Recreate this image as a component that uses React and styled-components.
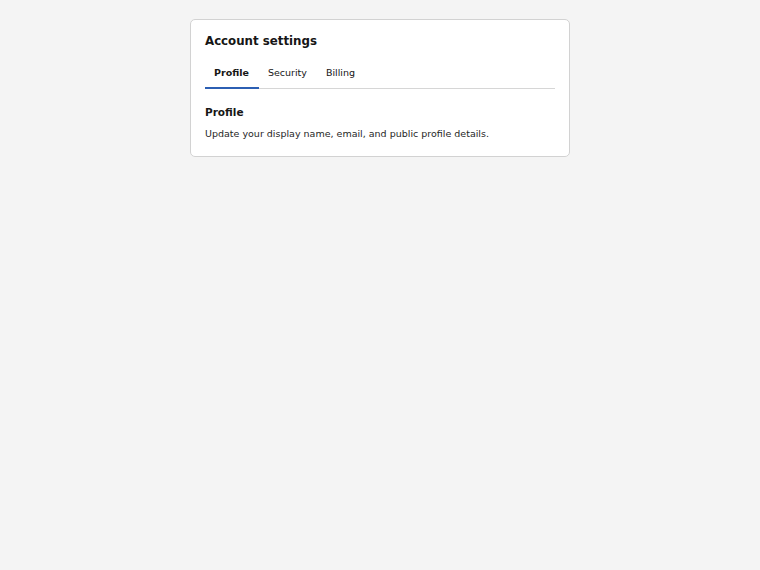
import React, { useState } from "react";
import styled, { createGlobalStyle } from "styled-components";

const GlobalStyle = createGlobalStyle`
  html, body {
    margin: 0;
    padding: 0;
    background: #f4f4f4;
    font-family: "DejaVu Sans", "Liberation Sans", sans-serif;
    color: #161616;
  }
`;

const Page = styled.div`
  display: flex;
  justify-content: center;
  padding-top: 19px;
`;

const Card = styled.section`
  width: 380px;
  box-sizing: border-box;
  background: #ffffff;
  border: 1px solid #d2d2d2;
  border-radius: 5px;
  padding: 13px 14px 16px;
`;

const Title = styled.h1`
  margin: 0;
  font-size: 11.8px;
  font-weight: 700;
  line-height: 16px;
`;

const TabList = styled.div`
  display: flex;
  margin-top: 16px;
  border-bottom: 1px solid #d6d6d6;
`;

const Tab = styled.button`
  appearance: none;
  background: none;
  border: none;
  border-bottom: 2px solid ${(p) => (p.$active ? "#2c5fb3" : "transparent")};
  margin-bottom: -1px;
  padding: 2px 10px 8px 9px;
  font-family: inherit;
  font-size: 9.5px;
  line-height: 12px;
  font-weight: ${(p) => (p.$active ? 700 : 400)};
  color: #161616;
  cursor: pointer;
`;

const Panel = styled.div`
  padding-top: 16px;
`;

const PanelHeading = styled.h2`
  margin: 0;
  font-size: 10.5px;
  font-weight: 700;
  line-height: 14px;
`;

const PanelText = styled.p`
  margin: 9px 0 0;
  font-size: 9.5px;
  line-height: 12px;
  color: #262626;
`;

const tabs = [
  { id: "profile", label: "Profile", text: "Update your display name, email, and public profile details." },
  { id: "security", label: "Security", text: "Manage your password and two-factor authentication." },
  { id: "billing", label: "Billing", text: "Review your plan, payment methods, and invoices." },
];

export default function App() {
  const [active, setActive] = useState("profile");
  const current = tabs.find((t) => t.id === active);

  return (
    <>
      <GlobalStyle />
      <Page>
        <Card>
          <Title>Account settings</Title>
          <TabList role="tablist">
            {tabs.map((t) => (
              <Tab
                key={t.id}
                role="tab"
                $active={t.id === active}
                onClick={() => setActive(t.id)}
              >
                {t.label}
              </Tab>
            ))}
          </TabList>
          <Panel role="tabpanel">
            <PanelHeading>{current.label}</PanelHeading>
            <PanelText>{current.text}</PanelText>
          </Panel>
        </Card>
      </Page>
    </>
  );
}
